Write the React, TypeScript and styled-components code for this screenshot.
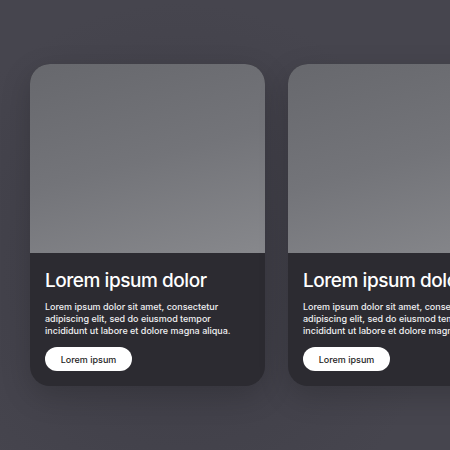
import styled, { createGlobalStyle } from "styled-components";

const GlobalStyle = createGlobalStyle`
  html, body {
    margin: 0;
    padding: 0;
    width: 450px;
    height: 450px;
    overflow: hidden;
  }
  body {
    font-family: Inter, "Liberation Sans", sans-serif;
    background: #45444d;
  }
`;

const Page = styled.div`
  width: 450px;
  height: 450px;
  overflow: hidden;
  background: radial-gradient(circle at 40% 60%, #3d3c45 0%, #46454e 70%);
  padding: 64px 0 0 30px;
  box-sizing: border-box;
`;

const Track = styled.div`
  display: flex;
  gap: 23px;
`;

const Card = styled.div`
  flex: 0 0 235px;
  height: 322px;
  border-radius: 20px;
  overflow: hidden;
  display: flex;
  flex-direction: column;
  background: #2c2b31;
  box-shadow: 0 10px 30px rgba(0, 0, 0, 0.18);
`;

const Cover = styled.div`
  height: 189px;
  background: linear-gradient(165deg, #67686d 0%, #737479 50%, #87888c 100%);
`;

const Body = styled.div`
  flex: 1;
  padding: 14px 15px 0;
  color: #fff;
`;

const Title = styled.h2`
  margin: 0;
  font-size: 19px;
  font-weight: 500;
  letter-spacing: -0.45px;
  line-height: 28px;
  white-space: nowrap;
`;

const Text = styled.p`
  margin: 6px 0 0;
  font-size: 9px;
  line-height: 12px;
  font-weight: 500;
  white-space: nowrap;
  color: #f0f0f2;
`;

const Button = styled.button`
  margin-top: 10px;
  width: 87px;
  height: 24px;
  border: none;
  border-radius: 12px;
  background: #fff;
  color: #1e1d22;
  font-family: inherit;
  font-size: 9px;
  font-weight: 500;
  cursor: pointer;
`;

const cards = [1, 2];

export default function App() {
  return (
    <>
      <GlobalStyle />
      <Page>
        <Track>
          {cards.map((c) => (
            <Card key={c}>
              <Cover />
              <Body>
                <Title>Lorem ipsum dolor</Title>
                <Text>
                  Lorem ipsum dolor sit amet, consectetur
                  <br />
                  adipiscing elit, sed do eiusmod tempor
                  <br />
                  incididunt ut labore et dolore magna aliqua.
                </Text>
                <Button>Lorem ipsum</Button>
              </Body>
            </Card>
          ))}
        </Track>
      </Page>
    </>
  );
}
